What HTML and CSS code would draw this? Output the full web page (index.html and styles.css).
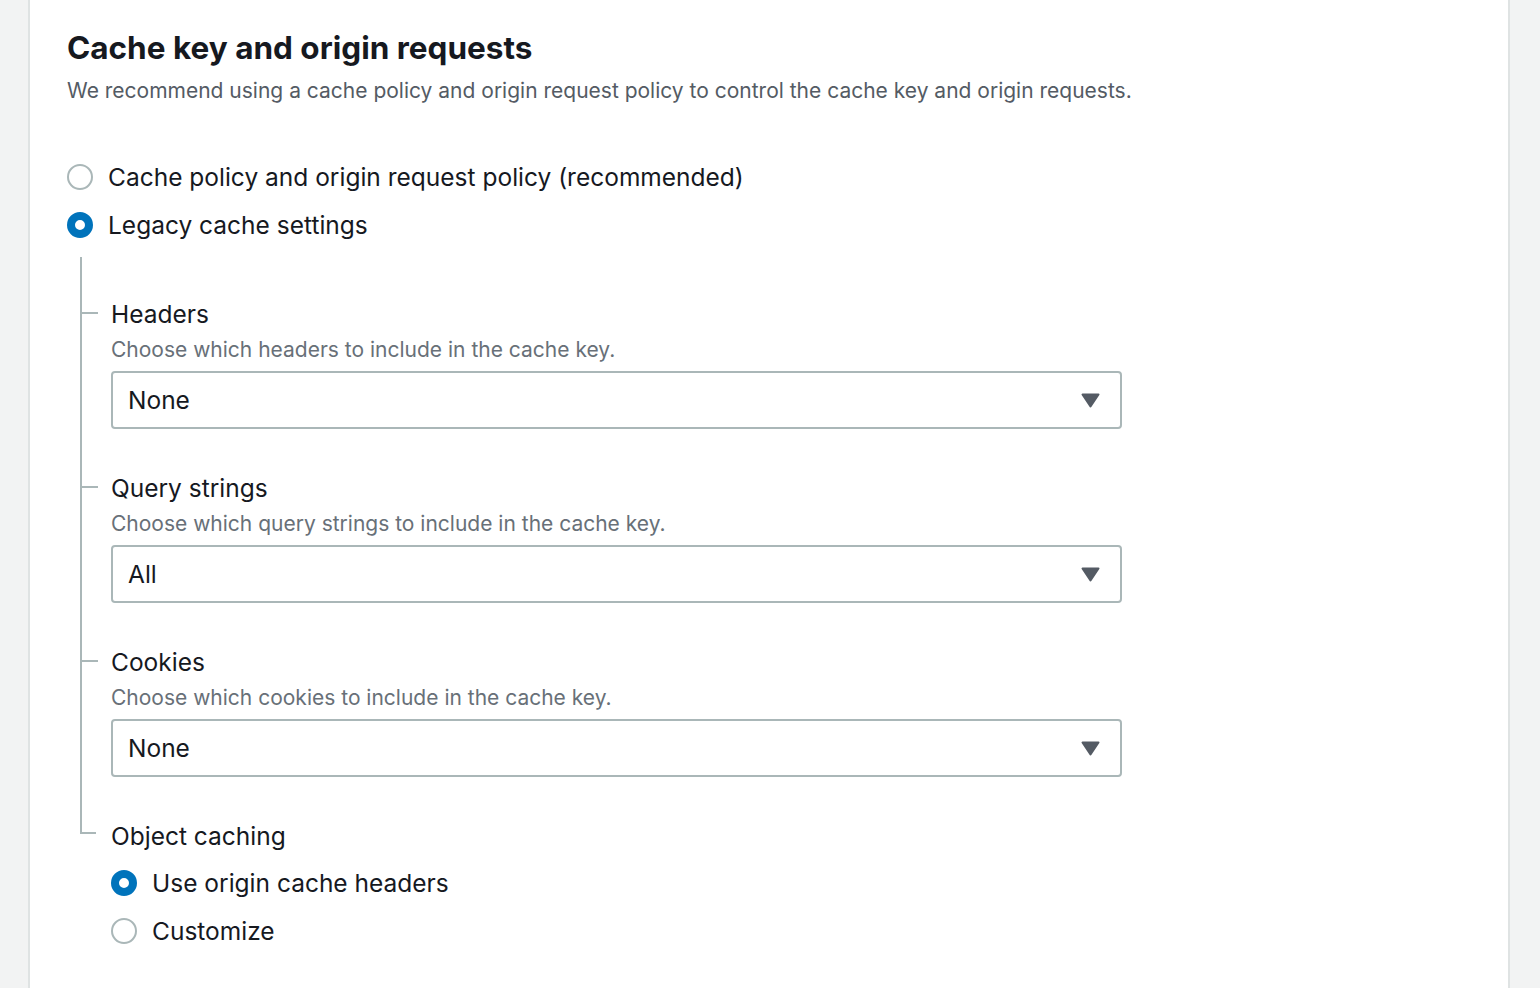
FILE: index.html
```html
<!DOCTYPE html>
<html lang="en">
<head>
<meta charset="utf-8">
<title>Cache key and origin requests</title>
<link rel="stylesheet" href="styles.css">
</head>
<body>
<div class="page">
  <section class="card">
    <h2 class="title">Cache key and origin requests</h2>
    <p class="subtitle">We recommend using a cache policy and origin request policy to control the cache key and origin requests.</p>

    <div class="radio-group top-group">
      <label class="radio-row"><span class="radio"></span><span class="radio-label">Cache policy and origin request policy (recommended)</span></label>
      <label class="radio-row"><span class="radio checked"></span><span class="radio-label">Legacy cache settings</span></label>
    </div>

    <div class="tree">
      <div class="tree-body">
        <div class="tree-item first">
          <div class="field-label">Headers</div>
          <div class="field-desc">Choose which headers to include in the cache key.</div>
          <div class="select"><span class="select-value">None</span><svg class="caret" width="19" height="15" viewBox="0 0 19 15"><polygon points="1.5,1.5 17.5,1.5 9.5,13.5" fill="#545b64" stroke="#545b64" stroke-width="2" stroke-linejoin="round"/></svg></div>
        </div>
        <div class="tree-item">
          <div class="field-label">Query strings</div>
          <div class="field-desc">Choose which query strings to include in the cache key.</div>
          <div class="select"><span class="select-value">All</span><svg class="caret" width="19" height="15" viewBox="0 0 19 15"><polygon points="1.5,1.5 17.5,1.5 9.5,13.5" fill="#545b64" stroke="#545b64" stroke-width="2" stroke-linejoin="round"/></svg></div>
        </div>
        <div class="tree-item">
          <div class="field-label">Cookies</div>
          <div class="field-desc">Choose which cookies to include in the cache key.</div>
          <div class="select"><span class="select-value">None</span><svg class="caret" width="19" height="15" viewBox="0 0 19 15"><polygon points="1.5,1.5 17.5,1.5 9.5,13.5" fill="#545b64" stroke="#545b64" stroke-width="2" stroke-linejoin="round"/></svg></div>
        </div>
      </div>
      <div class="tree-last">
        <div class="field-label">Object caching</div>
        <div class="radio-group inner-group">
          <label class="radio-row"><span class="radio checked"></span><span class="radio-label">Use origin cache headers</span></label>
          <label class="radio-row"><span class="radio"></span><span class="radio-label">Customize</span></label>
        </div>
      </div>
    </div>
  </section>
</div>
</body>
</html>
```

FILE: styles.css
```css
html, body {
  margin: 0;
  padding: 0;
}
body {
  background: #f2f3f3;
  font-family: Inter, Roboto, "Liberation Sans", sans-serif;
  color: #16191f;
}
.page {
  display: flex;
  height: 988px;
  overflow: hidden;
}
.card {
  margin-left: 28px;
  width: 1482px;
  box-sizing: border-box;
  background: #ffffff;
  border-left: 2px solid #dfe3e3;
  border-right: 2px solid #dfe3e3;
  padding: 28px 0 0 37px;
}
.title {
  margin: 0;
  font-size: 31.5px;
  line-height: 40px;
  font-weight: 700;
  color: #16191f;
}
.subtitle {
  margin: 8px 0 0 0;
  font-size: 21px;
  line-height: 30px;
  color: #545b64;
}
.radio-group {
  display: flex;
  flex-direction: column;
}
.top-group {
  margin-top: 47px;
}
.radio-row {
  display: flex;
  align-items: center;
  height: 48px;
  gap: 15px;
}
.radio {
  width: 26px;
  height: 26px;
  box-sizing: border-box;
  border-radius: 50%;
  border: 2px solid #aab7b8;
  background: #fff;
  flex: none;
}
.radio.checked {
  border: 8px solid #0073bb;
}
.radio-label {
  font-size: 24.5px;
  line-height: 34px;
  color: #16191f;
}
.tree {
  margin: 8px 0 0 13px;
}
.tree-body {
  border-left: 2px solid #aab7b8;
}
.tree-item {
  position: relative;
  padding: 42px 0 0 29px;
}
.tree-item.first {
  padding-top: 40px;
}
.tree-item::before {
  content: "";
  position: absolute;
  left: 0;
  top: 57px;
  width: 16px;
  height: 2px;
  background: #aab7b8;
}
.tree-item.first::before {
  top: 55px;
}
.tree-last {
  position: relative;
  padding: 42px 0 0 31px;
}
.tree-last::before {
  content: "";
  position: absolute;
  left: 0;
  top: 0;
  width: 16px;
  height: 57px;
  box-sizing: border-box;
  border-left: 2px solid #aab7b8;
  border-bottom: 2px solid #aab7b8;
}
.field-label {
  font-size: 24.5px;
  line-height: 34px;
  color: #16191f;
}
.field-desc {
  margin-top: 4px;
  font-size: 21px;
  line-height: 30px;
  color: #687078;
}
.select {
  margin-top: 6px;
  width: 1011px;
  height: 58px;
  box-sizing: border-box;
  border: 2px solid #aab7b8;
  border-radius: 4px;
  display: flex;
  align-items: center;
  justify-content: space-between;
  padding: 0 20px 0 15px;
}
.select-value {
  font-size: 24.5px;
  color: #16191f;
}
.caret {
  display: block;
}
.inner-group {
  margin-top: 6px;
}
.inner-group .radio-row {
  gap: 15px;
}
```
